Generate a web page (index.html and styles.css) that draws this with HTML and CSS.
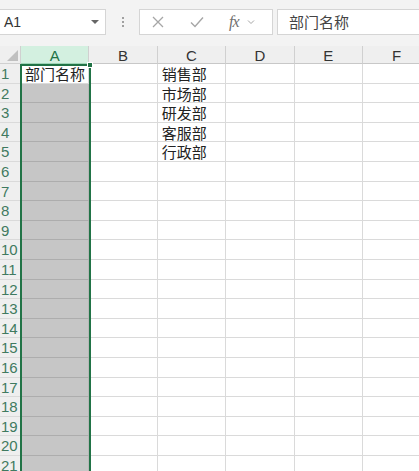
FILE: index.html
```html
<!DOCTYPE html>
<html lang="zh">
<head>
    <meta charset="UTF-8">
    <title>Sheet1</title>
    <link rel="stylesheet" href="styles.css">
</head>
<body>
    <div class="toolbar">
        <div class="name-box">
            <span>A1</span>
            <span class="caret"></span>
        </div>
        <div class="dots"><i></i><i></i><i></i></div>
        <div class="func-box">
            <svg class="ico" width="14" height="14" viewBox="0 0 14 14"><path d="M2 2 L12 12 M12 2 L2 12" stroke="#a6a6a6" stroke-width="1.3" fill="none"/></svg>
            <svg class="ico" width="16" height="14" viewBox="0 0 16 14"><path d="M2 7.5 L6 11.5 L14 2.5" stroke="#a6a6a6" stroke-width="1.4" fill="none"/></svg>
            <span class="fx">fx</span>
            <svg width="8" height="6" viewBox="0 0 8 6"><path d="M1 1.5 L4 4.5 L7 1.5" stroke="#a6a6a6" stroke-width="1" fill="none"/></svg>
        </div>
        <div class="formula">部门名称</div>
    </div>

    <div class="sheet-wrap">
        <div class="sheet">
            <div class="corner"><span></span></div>
            <div class="col-head sel">A</div>
            <div class="col-head">B</div>
            <div class="col-head">C</div>
            <div class="col-head">D</div>
            <div class="col-head">E</div>
            <div class="col-head">F</div>

            <div class="row-head">1</div><div class="cell active">部门名称</div><div class="cell"></div><div class="cell">销售部</div><div class="cell"></div><div class="cell"></div><div class="cell"></div>
            <div class="row-head">2</div><div class="cell gray"></div><div class="cell"></div><div class="cell">市场部</div><div class="cell"></div><div class="cell"></div><div class="cell"></div>
            <div class="row-head">3</div><div class="cell gray"></div><div class="cell"></div><div class="cell">研发部</div><div class="cell"></div><div class="cell"></div><div class="cell"></div>
            <div class="row-head">4</div><div class="cell gray"></div><div class="cell"></div><div class="cell">客服部</div><div class="cell"></div><div class="cell"></div><div class="cell"></div>
            <div class="row-head">5</div><div class="cell gray"></div><div class="cell"></div><div class="cell">行政部</div><div class="cell"></div><div class="cell"></div><div class="cell"></div>
            <div class="row-head">6</div><div class="cell gray"></div><div class="cell"></div><div class="cell"></div><div class="cell"></div><div class="cell"></div><div class="cell"></div>
            <div class="row-head">7</div><div class="cell gray"></div><div class="cell"></div><div class="cell"></div><div class="cell"></div><div class="cell"></div><div class="cell"></div>
            <div class="row-head">8</div><div class="cell gray"></div><div class="cell"></div><div class="cell"></div><div class="cell"></div><div class="cell"></div><div class="cell"></div>
            <div class="row-head">9</div><div class="cell gray"></div><div class="cell"></div><div class="cell"></div><div class="cell"></div><div class="cell"></div><div class="cell"></div>
            <div class="row-head">10</div><div class="cell gray"></div><div class="cell"></div><div class="cell"></div><div class="cell"></div><div class="cell"></div><div class="cell"></div>
            <div class="row-head">11</div><div class="cell gray"></div><div class="cell"></div><div class="cell"></div><div class="cell"></div><div class="cell"></div><div class="cell"></div>
            <div class="row-head">12</div><div class="cell gray"></div><div class="cell"></div><div class="cell"></div><div class="cell"></div><div class="cell"></div><div class="cell"></div>
            <div class="row-head">13</div><div class="cell gray"></div><div class="cell"></div><div class="cell"></div><div class="cell"></div><div class="cell"></div><div class="cell"></div>
            <div class="row-head">14</div><div class="cell gray"></div><div class="cell"></div><div class="cell"></div><div class="cell"></div><div class="cell"></div><div class="cell"></div>
            <div class="row-head">15</div><div class="cell gray"></div><div class="cell"></div><div class="cell"></div><div class="cell"></div><div class="cell"></div><div class="cell"></div>
            <div class="row-head">16</div><div class="cell gray"></div><div class="cell"></div><div class="cell"></div><div class="cell"></div><div class="cell"></div><div class="cell"></div>
            <div class="row-head">17</div><div class="cell gray"></div><div class="cell"></div><div class="cell"></div><div class="cell"></div><div class="cell"></div><div class="cell"></div>
            <div class="row-head">18</div><div class="cell gray"></div><div class="cell"></div><div class="cell"></div><div class="cell"></div><div class="cell"></div><div class="cell"></div>
            <div class="row-head">19</div><div class="cell gray"></div><div class="cell"></div><div class="cell"></div><div class="cell"></div><div class="cell"></div><div class="cell"></div>
            <div class="row-head">20</div><div class="cell gray"></div><div class="cell"></div><div class="cell"></div><div class="cell"></div><div class="cell"></div><div class="cell"></div>
            <div class="row-head">21</div><div class="cell gray"></div><div class="cell"></div><div class="cell"></div><div class="cell"></div><div class="cell"></div><div class="cell"></div>
        </div>
        <div class="selection"><span class="handle"></span></div>
    </div>
</body>
</html>
```

FILE: styles.css
```css
* {
    margin: 0;
    padding: 0;
    box-sizing: border-box;
}

body {
    font-family: "Liberation Sans", "Noto Sans CJK SC", sans-serif;
    background-color: #ffffff;
    width: 419px;
    height: 471px;
    overflow: hidden;
}

.toolbar {
    height: 46px;
    background-color: #f3f3f3;
    display: flex;
    align-items: flex-start;
    padding-top: 9px;
}

.name-box {
    width: 106px;
    height: 26px;
    background-color: #fff;
    border: 1px solid #d5d5d5;
    border-left: none;
    display: flex;
    align-items: center;
    justify-content: space-between;
    padding: 0 6px 0 4px;
    font-size: 14px;
    color: #333;
}

.caret {
    width: 0;
    height: 0;
    border-left: 4px solid transparent;
    border-right: 4px solid transparent;
    border-top: 4px solid #666;
}

.dots {
    width: 33px;
    height: 26px;
    display: flex;
    flex-direction: column;
    align-items: center;
    justify-content: center;
    gap: 2px;
}

.dots i {
    width: 2px;
    height: 2px;
    background-color: #a0a0a0;
}

.func-box {
    width: 134px;
    height: 26px;
    background-color: #fff;
    border: 1px solid #d5d5d5;
    display: flex;
    align-items: center;
    padding-left: 11px;
}

.func-box .ico {
    margin-right: 24px;
}

.fx {
    font-family: "Liberation Serif", "DejaVu Serif", serif;
    font-style: italic;
    font-size: 16px;
    color: #707070;
    margin-right: 8px;
    letter-spacing: -1px;
}

.formula {
    flex: 1;
    height: 26px;
    margin-left: 4px;
    background-color: #fff;
    border: 1px solid #d5d5d5;
    border-right: none;
    padding-left: 11px;
    font-family: "Noto Sans CJK SC", sans-serif;
    font-size: 15px;
    line-height: 24px;
    color: #444;
}

.sheet-wrap {
    position: relative;
    height: 425px;
    overflow: hidden;
}

.sheet {
    display: grid;
    grid-template-columns: 21px repeat(6, 68.4px);
    grid-template-rows: 18px;
    grid-auto-rows: 19.6px;
}

.corner {
    background-color: #efefef;
    border-right: 1px solid #d0d0d0;
    border-bottom: 1px solid #d0d0d0;
    position: relative;
}

.corner span {
    position: absolute;
    right: 2px;
    bottom: 2px;
    width: 0;
    height: 0;
    border-left: 11px solid transparent;
    border-bottom: 11px solid #c0c0c0;
}

.col-head {
    background-color: #efefef;
    border-right: 1px solid #d0d0d0;
    border-bottom: 1px solid #c8c8c8;
    text-align: center;
    font-size: 15px;
    line-height: 20px;
    color: #333;
}

.col-head.sel {
    background-color: #d3f0e0;
    color: #217346;
    border-bottom: 1px solid #9fd5b7;
}

.row-head {
    background-color: #efefef;
    border-right: 1px solid #d0d0d0;
    border-bottom: 1px solid #dadada;
    font-size: 15px;
    line-height: 20px;
    padding-left: 1px;
    color: #3f7a60;
    white-space: nowrap;
}

.cell {
    border-right: 1px solid #dadada;
    border-bottom: 1px solid #dadada;
    font-family: "Noto Sans CJK SC", sans-serif;
    font-size: 15px;
    line-height: 19px;
    padding-left: 4px;
    color: #222;
    white-space: nowrap;
    overflow: hidden;
}

.cell.gray {
    background-color: #c6c6c6;
    border-bottom-color: #adadad;
    border-right-color: #b8b8b8;
}

.selection {
    position: absolute;
    left: 20px;
    top: 18px;
    width: 71px;
    height: 480px;
    border: 2px solid #217346;
    pointer-events: none;
}

.handle {
    position: absolute;
    right: -4px;
    top: -4px;
    width: 6px;
    height: 6px;
    background-color: #217346;
    border: 1px solid #fff;
}
```
